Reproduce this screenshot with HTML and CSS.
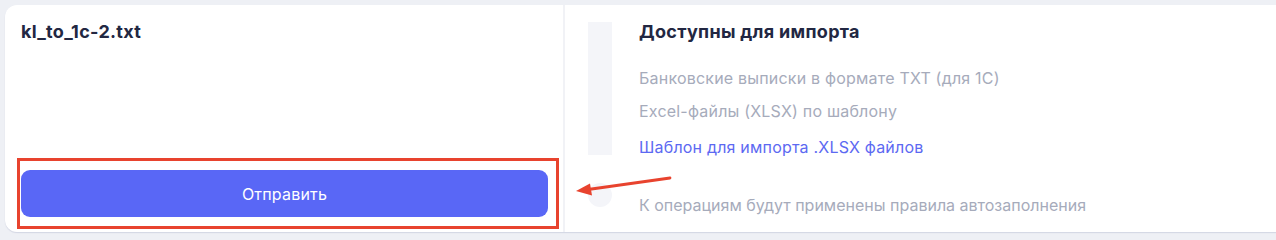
FILE: index.html
```html
<!DOCTYPE html>
<html lang="ru">
<head>
<meta charset="utf-8">
<link rel="stylesheet" href="styles.css">
</head>
<body>
<div class="page">
  <div class="card">
    <div class="left">
      <div class="filename">kl_to_1c-2.txt</div>
      <div class="highlight">
        <button class="submit">Отправить</button>
      </div>
    </div>
    <div class="right">
      <div class="skeleton">
        <div class="sk-bar"></div>
        <div class="sk-dot"></div>
      </div>
      <div class="info">
        <div class="info-title">Доступны для импорта</div>
        <div class="info-item">Банковские выписки в формате ТХТ (для 1С)</div>
        <div class="info-item second">Excel-файлы (XLSX) по шаблону</div>
        <a class="info-link" href="#">Шаблон для импорта .XLSX файлов</a>
        <div class="info-note">К операциям будут применены правила автозаполнения</div>
      </div>
    </div>
    <svg class="arrow" width="100" height="24" viewBox="0 0 100 24">
      <line x1="96" y1="3" x2="14" y2="14.5" stroke="#e8432e" stroke-width="2.8" stroke-linecap="round"/>
      <polygon points="2,16 16,8.5 18,20.5" fill="#e8432e"/>
    </svg>
  </div>
</div>
</body>
</html>
```

FILE: styles.css
```css
* { box-sizing: border-box; }
html, body { margin: 0; padding: 0; }
body {
  background: #eef0f5;
  font-family: Inter, "Noto Sans", "Liberation Sans", sans-serif;
  width: 1276px;
  height: 240px;
  overflow: hidden;
}
.page {
  padding: 5px 0 0 5px;
}
.card {
  position: relative;
  width: 1290px;
  height: 227px;
  background: #ffffff;
  border-radius: 12px;
  box-shadow: 0 1px 1px rgba(160, 165, 195, 0.35);
  display: flex;
}
.left {
  width: 558px;
  display: flex;
  flex-direction: column;
  justify-content: space-between;
  padding: 15px 0 3px 12px;
}
.filename {
  padding-left: 4px;
  font-size: 18px;
  line-height: 24px;
  font-weight: 700;
  letter-spacing: 0.3px;
  color: #222742;
}
.highlight {
  width: 542px;
  height: 71px;
  border: 3px solid #e8432e;
  padding: 9px 8px 9px 1px;
}
.submit {
  display: block;
  width: 100%;
  height: 47px;
  border: none;
  border-radius: 9px;
  background: #5967f6;
  color: #ffffff;
  font-family: inherit;
  font-size: 16px;
  font-weight: 400;
  letter-spacing: 0.2px;
}
.right {
  flex: 1;
  border-left: 2px solid #f1f2f6;
  display: flex;
  padding-left: 23px;
}
.skeleton {
  width: 24px;
  padding-top: 17px;
  display: flex;
  flex-direction: column;
}
.sk-bar {
  height: 133px;
  background: #f4f5f9;
}
.sk-dot {
  margin-top: 28px;
  width: 24px;
  height: 24px;
  border-radius: 50%;
  background: #f4f5f9;
}
.info {
  padding: 15px 0 0 27px;
  display: flex;
  flex-direction: column;
  align-items: flex-start;
}
.info-title {
  font-size: 18px;
  line-height: 24px;
  font-weight: 700;
  letter-spacing: 0.3px;
  color: #222742;
  margin-bottom: 24px;
}
.info-item, .info-link, .info-note {
  font-size: 16px;
  line-height: 20px;
  letter-spacing: 0.2px;
  color: #a6abbb;
}
.info-item { margin-bottom: 13px; }
.info-item.second { margin-bottom: 16px; }
.info-link {
  color: #5c69f2;
  text-decoration: none;
}
.info-note {
  margin-top: 38px;
  letter-spacing: 0;
}
.arrow {
  position: absolute;
  left: 569px;
  top: 170px;
}
```
